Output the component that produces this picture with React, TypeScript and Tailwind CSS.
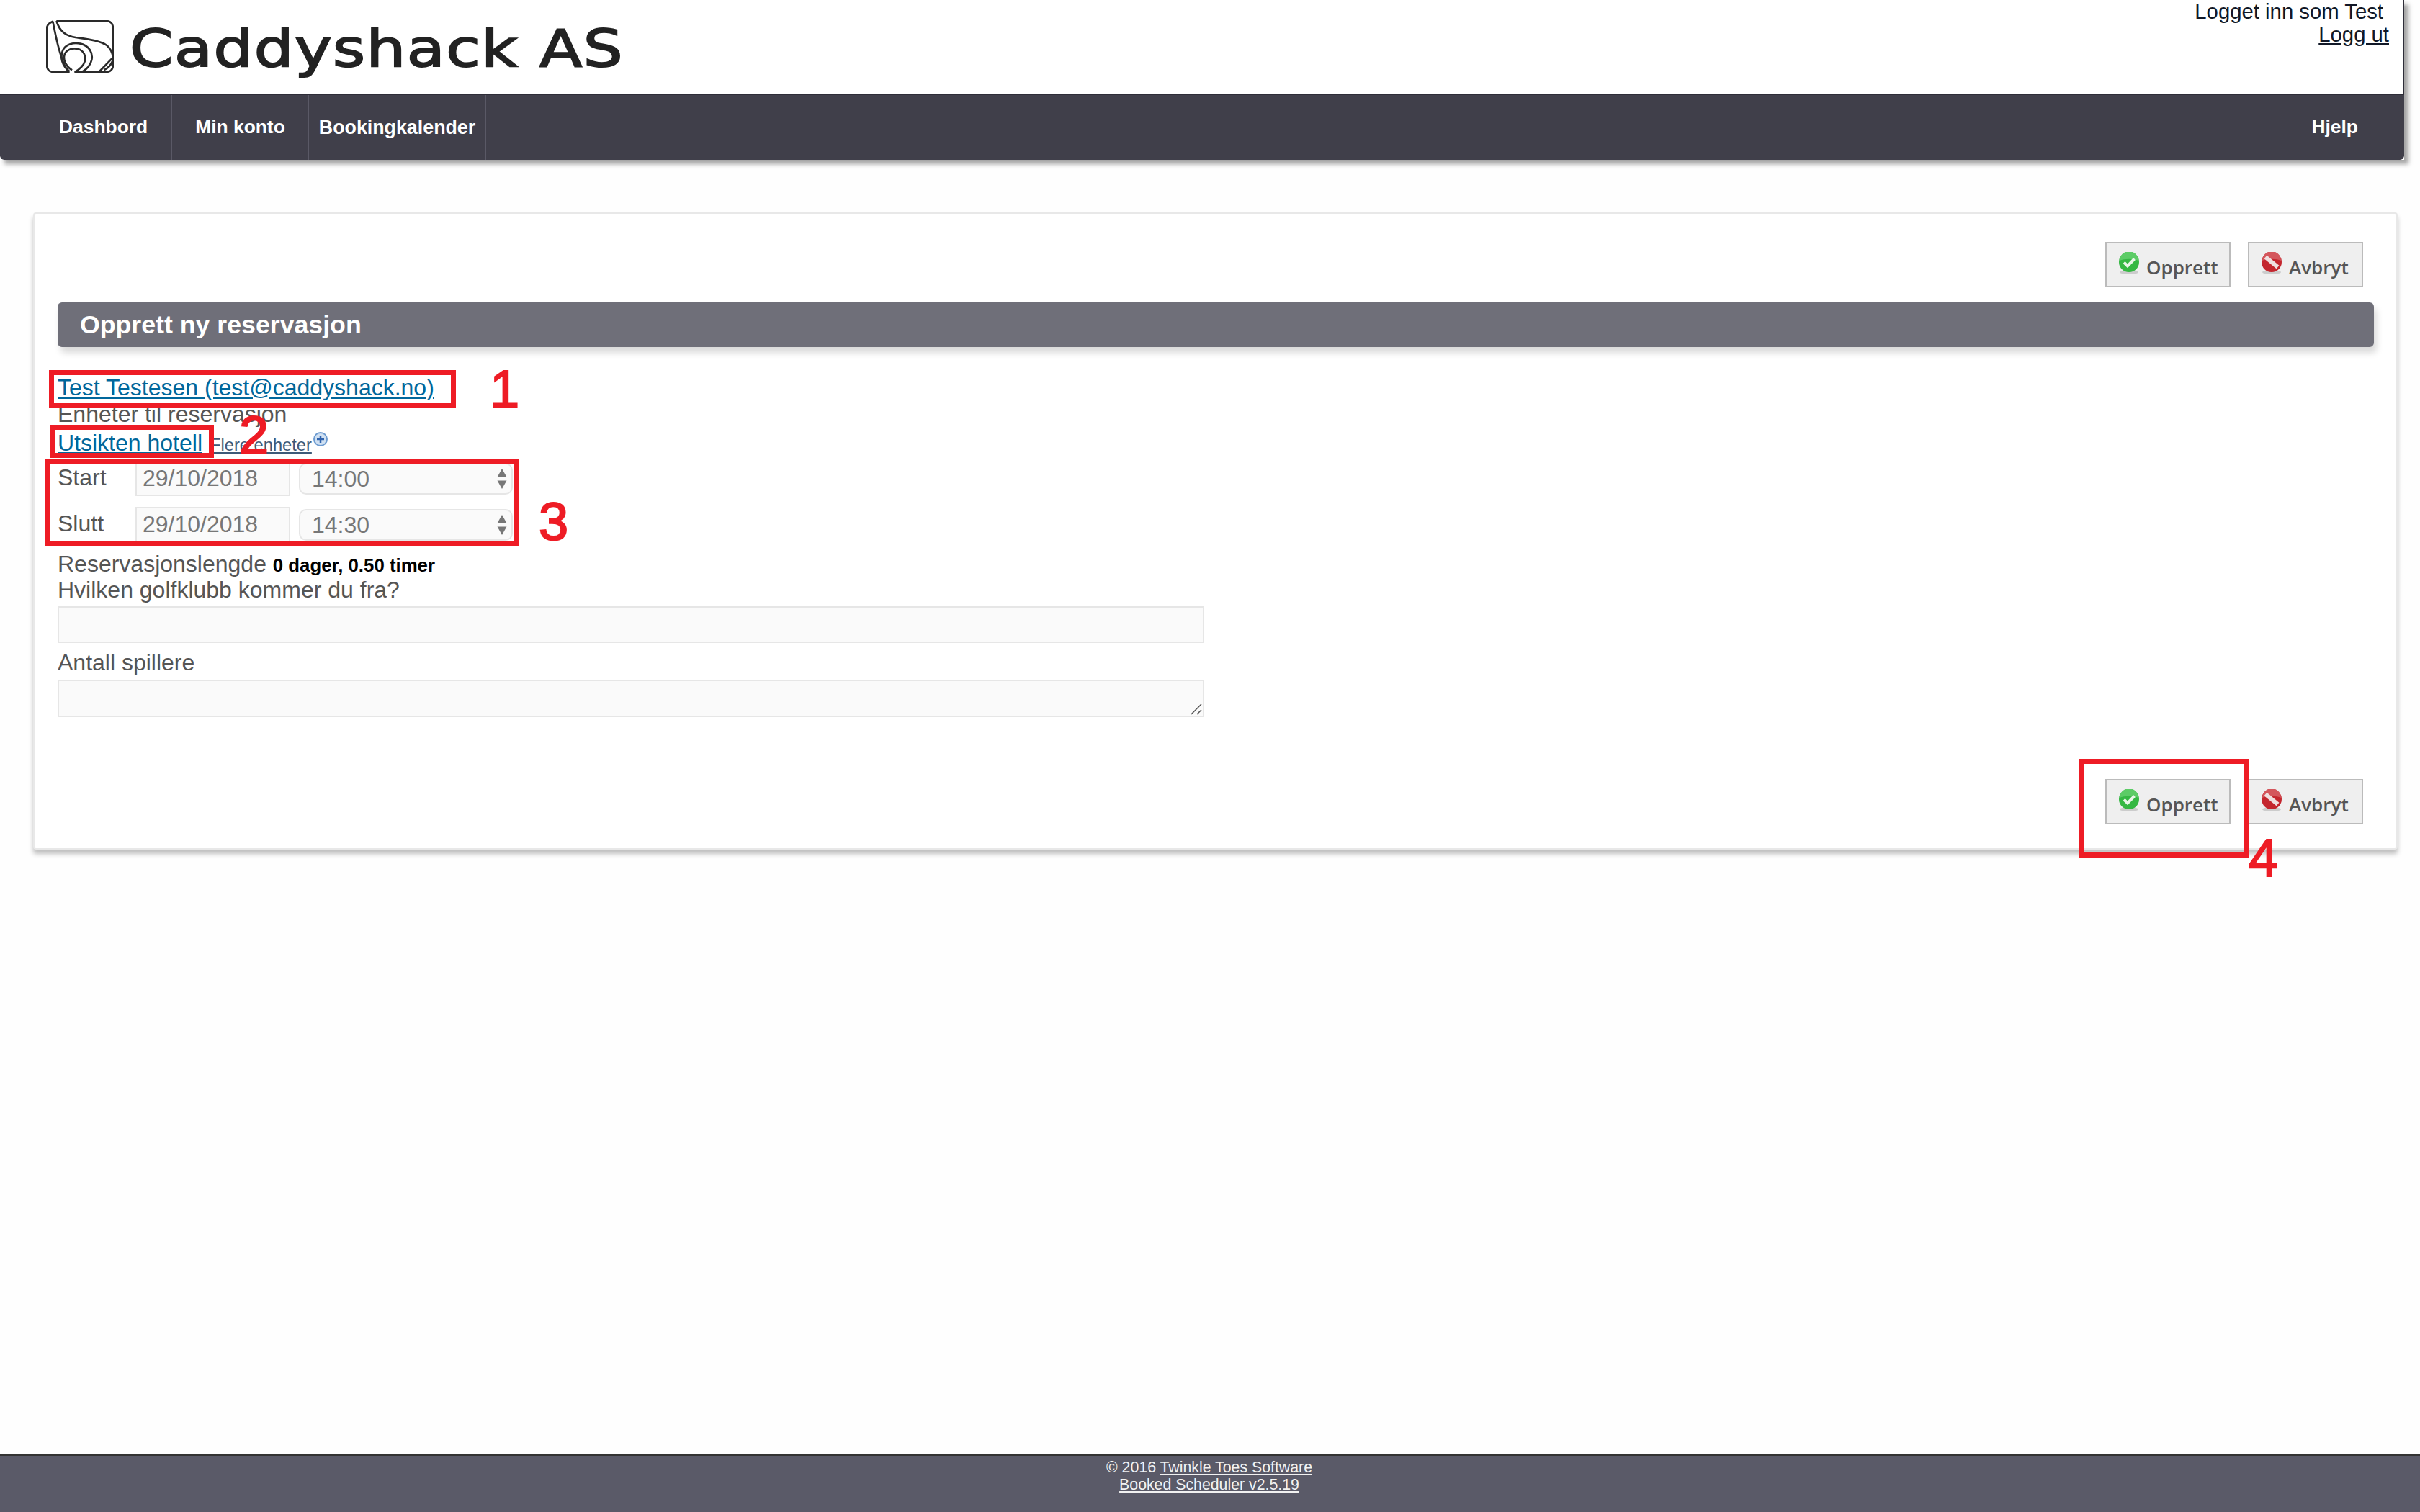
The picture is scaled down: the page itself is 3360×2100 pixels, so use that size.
import React from "react";

const CheckIcon = () => (
  <svg width="30" height="32" viewBox="0 0 30 32" className="shrink-0">
    <ellipse cx="15" cy="28" rx="13" ry="3" fill="#999" opacity="0.4" />
    <circle cx="15" cy="14" r="14" fill="#35b843" />
    <path d="M2 12a13 13 0 0 1 26 0c-6-3-20-3-26 0z" fill="#5ccc66" />
    <path d="M8 14.5l5 5 9.5-10" fill="none" stroke="#e8f6e8" strokeWidth="4" />
  </svg>
);

const StopIcon = () => (
  <svg width="30" height="32" viewBox="0 0 30 32" className="shrink-0">
    <ellipse cx="15" cy="28" rx="13" ry="3" fill="#999" opacity="0.4" />
    <circle cx="15" cy="14" r="14" fill="#c4262e" />
    <path d="M2 12a13 13 0 0 1 26 0c-6-3-20-3-26 0z" fill="#d4565c" />
    <path d="M6.5 7l17 14" stroke="#f0dfdf" strokeWidth="6" />
  </svg>
);

const ActionButtons = () => (
  <div className="flex justify-end gap-[24px] pr-[46px]">
    <button className="flex h-[63px] w-[174px] items-start border-2 border-[#bbbbbb] bg-[#efefef] pl-[16px] pt-[12px] text-[26px] font-semibold text-[#555555] font-['Open_Sans',sans-serif]">
      <CheckIcon />
      <span className="ml-[9px] mt-[3px] leading-[36px]">Opprett</span>
    </button>
    <button className="flex h-[63px] w-[160px] items-start border-2 border-[#bbbbbb] bg-[#efefef] pl-[16px] pt-[12px] text-[26px] font-semibold text-[#555555] font-['Open_Sans',sans-serif]">
      <StopIcon />
      <span className="ml-[9px] mt-[3px] leading-[36px]">Avbryt</span>
    </button>
  </div>
);

const TimeSelect = ({ value }: { value: string }) => (
  <div className="mt-[3px] ml-[12px] flex h-[44px] w-[297px] items-center justify-between rounded-[10px] border-2 border-[#e6e6e6] bg-[#fafafa] pl-[16px] pr-[5px] text-[#777777]">
    <span>{value}</span>
    <svg width="16" height="28" viewBox="0 0 16 28">
      <path d="M8 0l6.500 11.500h-13zM1.500 16.500h13L8 28z" fill="#777777" />
    </svg>
  </div>
);

const DateRow = ({ label, date, time, className }: { label: string; date: string; time: string; className?: string }) => (
  <div className={"flex items-start " + (className ?? "")}>
    <span className="w-[108px] leading-[46px] text-[#555555]">{label}</span>
    <input
      readOnly
      value={date}
      className="h-[49px] w-[215px] border-2 border-[#e6e6e6] bg-[#fafafa] pl-[8px] text-[#777777]"
    />
    <TimeSelect value={time} />
  </div>
);

const Annotation = ({ className, children }: { className: string; children?: React.ReactNode }) => (
  <div className={"absolute " + className}>{children}</div>
);

export default function App() {
  return (
    <div className="relative flex min-h-[2100px] flex-col overflow-hidden bg-[#fefefe] text-[32px] font-['Liberation_Sans',sans-serif]">
      {/* HEADER */}
      <div className="w-[3338px] shadow-[6px_6px_6px_rgba(0,0,0,0.35)]">
        <div className="flex h-[130px] justify-between border-r-2 border-[#2e2d38] bg-white">
          <div className="flex items-start pl-[64px] pt-[28px]">
            <svg width="94" height="73" viewBox="42 40 282 219" fill="none" stroke="#2a2a2a" strokeWidth="8">
              <path d="M85 43H290Q321 43 321 75V225Q321 256 290 256H160" />
              <path d="M140 256H75Q45 256 45 225V75Q45 55 70 45" />
              <path d="M70 45C80 95 90 150 105 190C112 215 122 238 135 254" />
              <path d="M85 43C100 90 125 105 165 112C220 120 265 125 295 145C310 158 318 175 321 195" />
              <path d="M138 252C110 232 98 195 112 165C125 140 155 132 185 138C220 146 238 175 232 205C227 228 210 245 192 256" />
              <path d="M150 248C125 232 110 205 120 180C130 160 155 155 175 160C198 166 210 190 203 212C197 232 180 245 162 256" />
              <path d="M262 256L321 195" />
              <path d="M283 248C300 240 312 228 318 212" />
            </svg>
            <span className="ml-[22px] mt-[-6px] origin-left scale-x-[1.2] text-[72px] leading-[90px] tracking-[1.3px] text-[#222222] [-webkit-text-stroke:2px_#222222] font-['DejaVu_Sans',sans-serif]">
              Caddyshack AS
            </span>
          </div>
          <div className="pr-[19px] text-right text-[29.3px] leading-[32px] text-[#111827]">
            <div className="pr-[8px]">Logget inn som Test</div>
            <a className="underline">Logg ut</a>
          </div>
        </div>
        {/* NAV */}
        <div className="flex h-[92px] items-stretch rounded-b-[6px] border-t-2 border-[#2e2d38] bg-[#403f4a] text-[26.4px] font-bold text-white">
          <div className="flex w-[239px] items-center border-r border-[#5a5966] pl-[82px]">Dashbord</div>
          <div className="flex w-[190px] items-center justify-center border-r border-[#5a5966]">Min konto</div>
          <div className="flex w-[246px] items-center justify-center border-r border-[#5a5966] text-[26.8px]">Bookingkalender</div>
          <div className="ml-auto flex items-center pr-[64px]">Hjelp</div>
        </div>
      </div>

      {/* CARD */}
      <div className="ml-[46px] mt-[73px] h-[885px] w-[3283px] rounded-[4px] border-2 border-[#e8e8e8] bg-white pt-[39px] shadow-[0_6px_6px_rgba(0,0,0,0.25)]">
        <ActionButtons />
        <div className="ml-[32px] mr-[31px] mt-[21px] flex h-[62px] items-center rounded-[6px] bg-[#6f6f79] pl-[31px] pt-[2px] text-[35.7px] font-bold text-white shadow-[4px_8px_10px_rgba(0,0,0,0.15)]">
          Opprett ny reservasjon
        </div>

        <div className="ml-[32px] mt-[40px] flex h-[484px] items-start">
          <div className="w-[1592px] text-[#555555]">
            <div className="h-[32px] leading-[32px]">
              <a className="text-[#00679c] underline">Test Testesen (test@caddyshack.no)</a>
            </div>
            <div className="mt-[2px] h-[38px] leading-[38px]">Enheter til reservasjon</div>
            <div className="flex h-[42px] items-baseline leading-[42px]">
              <a className="text-[#00679c] underline">Utsikten hotell</a>
              <a className="ml-[11px] text-[23.7px] text-[#3d5a78] underline">Flere enheter</a>
              <svg width="22" height="26" viewBox="0 0 22 26" className="ml-[1px] mt-[5px] self-start">
                <circle cx="11" cy="11" r="9" fill="#cfe0f2" stroke="#6d9bd0" strokeWidth="2" />
                <path d="M6 11h10M11 6v10" stroke="#2f62ad" strokeWidth="2.500" />
              </svg>
            </div>
            <DateRow className="mt-[4px]" label="Start" date="29/10/2018" time="14:00" />
            <DateRow className="mt-[15px]" label="Slutt" date="29/10/2018" time="14:30" />
            <div className="mt-[13px] h-[34px] leading-[34px]">
              Reservasjonslengde <span className="text-[25.8px] font-bold text-black">0 dager, 0.50 timer</span>
            </div>
            <div className="h-[38px] leading-[38px]">Hvilken golfklubb kommer du fra?</div>
            <input className="mt-[4px] block h-[51px] w-full border-2 border-[#e6e6e6] bg-[#fafafa]" />
            <div className="mt-[7px] h-[40px] leading-[40px]">Antall spillere</div>
            <div className="relative mt-[4px]">
              <textarea className="block h-[52px] w-full resize-none border-2 border-[#e6e6e6] bg-[#fafafa]" />
              {/* resize grip */}
              <svg width="18" height="16" viewBox="0 0 18 16" className="absolute bottom-[3px] right-[2px]" stroke="#555555" strokeWidth="1.500">
                <path d="M2 15L16 1M10 15l6-6" />
              </svg>
            </div>
          </div>
          <div className="ml-[66px] h-[484px] w-px bg-[#bdbdbd]" />
        </div>

        <div className="mt-[76px]">
          <ActionButtons />
        </div>
      </div>

      {/* FOOTER */}
      <div className="mt-auto h-[80px] border-t-2 border-[#333333] bg-[#5a5a68] pt-[4px] pr-[2px] text-center text-[21.3px] leading-[24px] text-[#f2f2f2]">
        <div>
          © 2016 <a className="underline">Twinkle Toes Software</a>
        </div>
        <div>
          <a className="underline">Booked Scheduler v2.5.19</a>
        </div>
      </div>

      {/* RED ANNOTATIONS */}
      <Annotation className="left-[68px] top-[514px] h-[53px] w-[565px] border-[7px] border-[#ee1c25]" />
      <Annotation className="left-[70px] top-[590px] h-[46px] w-[227px] border-[7px] border-[#ee1c25]" />
      <Annotation className="left-[63px] top-[638px] h-[121px] w-[657px] border-[7px] border-[#ee1c25]" />
      <Annotation className="left-[2886px] top-[1054px] h-[137px] w-[237px] border-[7px] border-[#ee1c25]" />
      <Annotation className="left-[680px] top-[504px] text-[74px] leading-[74px] text-[#ee1c25] [-webkit-text-stroke:2px_#ee1c25]">1</Annotation>
      <Annotation className="left-[332px] top-[568px] text-[74px] leading-[74px] text-[#ee1c25] [-webkit-text-stroke:2px_#ee1c25]">2</Annotation>
      <Annotation className="left-[748px] top-[688px] text-[74px] leading-[74px] text-[#ee1c25] [-webkit-text-stroke:2px_#ee1c25]">3</Annotation>
      <Annotation className="left-[3122px] top-[1155px] text-[74px] leading-[74px] text-[#ee1c25] [-webkit-text-stroke:2px_#ee1c25]">4</Annotation>
    </div>
  );
}
